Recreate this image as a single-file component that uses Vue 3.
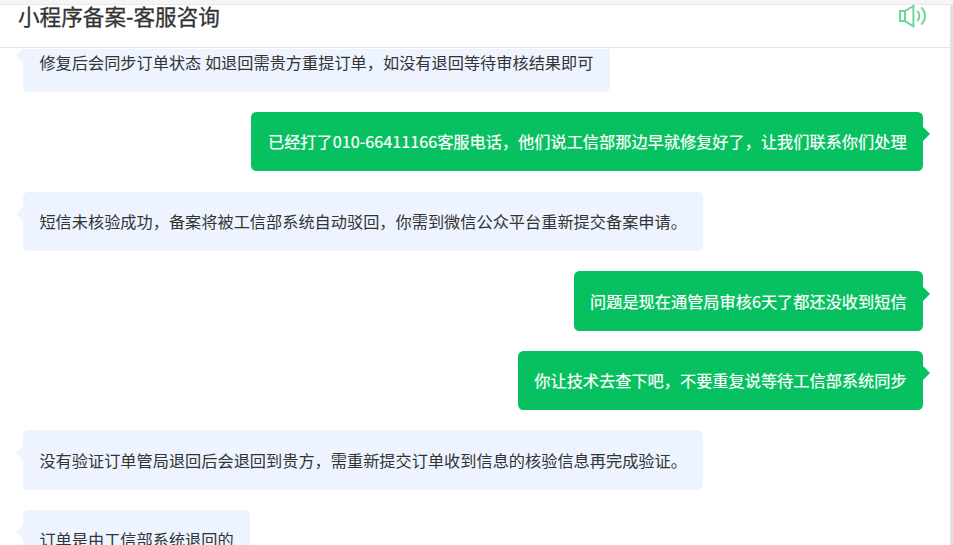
<template>
    <div class="page">
        <div class="top-strip"></div>
        <div class="window">
            <header class="chat-header">
                <h1 class="title">小程序备案-客服咨询</h1>
                <svg class="sound" width="30" height="24" viewBox="0 0 30 24" fill="none" stroke="#6bd69d"
                    stroke-width="2">
                    <path d="M3 7h5v10H3z" />
                    <path d="M8 7 16.4 2v20.4L8 17.2" />
                    <path d="M20.4 6.8c2.6 2.9 2.6 7.5 0 10.4" />
                    <path d="M24.2 3.4c5 4.9 5 12.3 0 17.2" />
                </svg>
            </header>

            <main class="chat-body">
                <div class="list">
                    <div v-for="(msg, i) in messages" :key="i" class="row" :class="{ mine: msg.mine }">
                        <div class="bubble">{{ msg.text }}</div>
                    </div>
                </div>
            </main>
        </div>
    </div>
</template>

<script setup>
const messages = [
    { mine: false, text: "修复后会同步订单状态 如退回需贵方重提订单，如没有退回等待审核结果即可" },
    { mine: true, text: "已经打了010-66411166客服电话，他们说工信部那边早就修复好了，让我们联系你们处理" },
    { mine: false, text: "短信未核验成功，备案将被工信部系统自动驳回，你需到微信公众平台重新提交备案申请。" },
    { mine: true, text: "问题是现在通管局审核6天了都还没收到短信" },
    { mine: true, text: "你让技术去查下吧，不要重复说等待工信部系统同步" },
    { mine: false, text: "没有验证订单管局退回后会退回到贵方，需重新提交订单收到信息的核验信息再完成验证。" },
    { mine: false, text: "订单是由工信部系统退回的" }
]
</script>

<style>
body {
    margin: 0;
    overflow: hidden;
}
</style>

<style scoped>
.page {
    display: flex;
    flex-direction: column;
    height: 100vh;
    overflow: hidden;
    background: #fff;
    color: #333;
    font-family: "Noto Sans CJK SC", sans-serif;
}

.top-strip {
    flex: none;
    height: 4px;
    background: #f5f5f5;
    border-bottom: 1px solid #e8e8e8;
}

.window {
    flex: 1;
    min-height: 0;
    display: flex;
    flex-direction: column;
    border-right: 3px solid #dee2e6;
}

.chat-header {
    flex: none;
    display: flex;
    justify-content: space-between;
    align-items: flex-start;
    height: 42px;
    padding: 0 23px 0 18px;
    border-bottom: 1px solid #e6e6e6;
}

.title {
    margin: -5px 0 0;
    font-size: 21.6px;
    font-weight: 400;
    line-height: 32px;
    -webkit-text-stroke: 0.3px;
}

.sound {
    margin-top: -1px;
}

.chat-body {
    flex: 1;
    min-height: 0;
    margin-top: 1px;
    overflow: hidden;
}

/* scrolled so that the first bubble is cut by the header */
.list {
    margin-top: -16.5px;
    padding: 0 27px 0 23px;
}

.row {
    display: flex;
    margin-bottom: 20.2px;

    &.mine {
        justify-content: flex-end;
    }
}

.bubble {
    position: relative;
    box-sizing: border-box;
    height: 59.4px;
    padding: 0.3px 16.4px 0;
    border-radius: 5.4px;
    background: #edf4ff;
    font-size: 16.2px;
    line-height: 59.4px;
    white-space: nowrap;

    &::before {
        content: "";
        position: absolute;
        top: 15.3px;
        left: -7px;
        border: 7px solid transparent;
        border-left-width: 0;
        border-right-color: #edf4ff;
    }
}

.mine .bubble {
    padding-left: 16.55px;
    background: #07c160;
    color: #fff;
    -webkit-text-stroke: 0.2px;

    &::before {
        left: auto;
        right: -7px;
        border-width: 7px 0 7px 7px;
        border-left-color: #07c160;
    }
}
</style>
